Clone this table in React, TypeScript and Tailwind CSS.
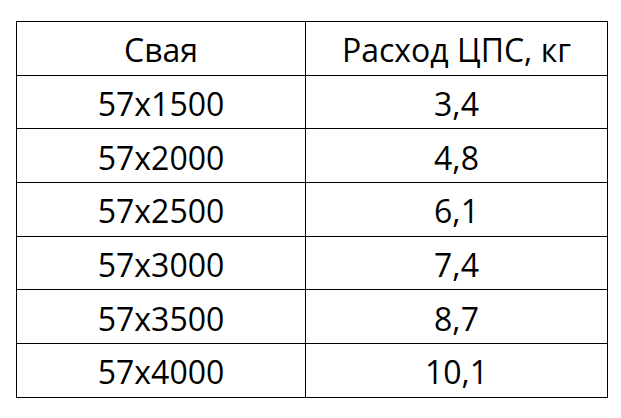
const rows: [string, string][] = [
  ['57x1500', '3,4'],
  ['57x2000', '4,8'],
  ['57x2500', '6,1'],
  ['57x3000', '7,4'],
  ['57x3500', '8,7'],
  ['57x4000', '10,1'],
]

export default function App() {
  return (
    <div className="w-[621px] h-[418px] bg-white pt-[21px] pl-[16px]" style={{ fontFamily: '"Open Sans", sans-serif' }}>
      <table className="border-collapse text-black text-[32px] leading-none">
        <tbody>
          <tr className="h-[53.7px]">
            <td className="w-[289px] border border-black text-center pt-[4px]">Свая</td>
            <td className="w-[302px] border border-black text-center pt-[4px]">Расход ЦПС, кг</td>
          </tr>
          {rows.map(([a, b]) => (
            <tr key={a} className="h-[53.7px]">
              <td className="border border-black text-center pt-[4px]">{a}</td>
              <td className="border border-black text-center pt-[4px]">{b}</td>
            </tr>
          ))}
        </tbody>
      </table>
    </div>
  )
}
